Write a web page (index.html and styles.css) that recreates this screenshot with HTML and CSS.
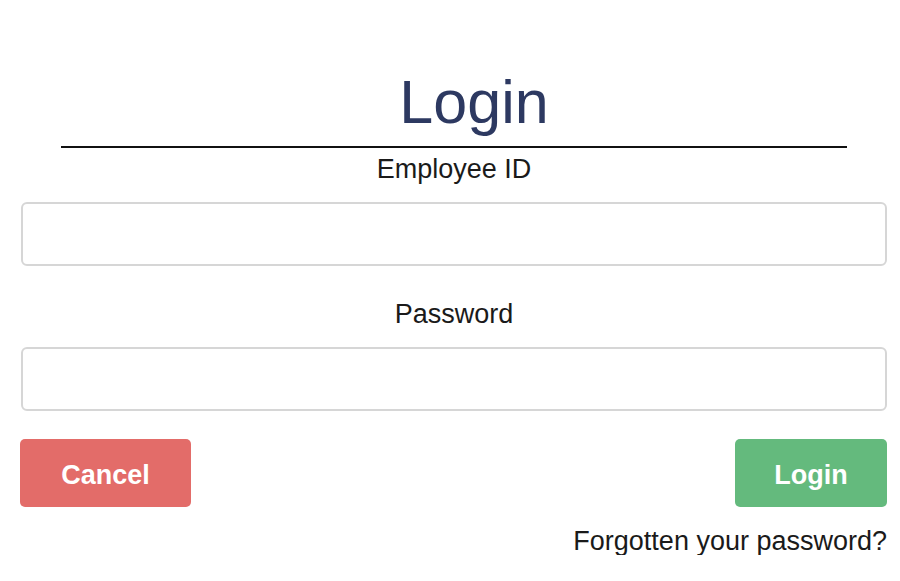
FILE: index.html
```html
<!DOCTYPE html>
<html lang="en">
<head>
  <meta charset="UTF-8" />
  <meta name="viewport" content="width=device-width, initial-scale=1.0"/>
  <title>Login</title>
  <link rel="stylesheet" href="styles.css">
</head>
<body>
  <div class="container">
    <h1>Login</h1>
    <hr class="divider" />
    <form id="loginForm">
      <label for="employeeId">Employee ID</label>
      <input type="text" id="employeeId" name="employeeId" />

      <label for="password" class="second">Password</label>
      <input type="password" id="password" name="password" />

      <div class="actions">
        <button type="button" class="btn cancel">Cancel</button>
        <button type="submit" class="btn login">Login</button>
      </div>
    </form>
    <a href="#" class="forgot">Forgotten your password?</a>
  </div>
</body>
</html>
```

FILE: styles.css
```css
body {
  margin: 0;
  background-color: #ffffff;
  font-family: "Liberation Sans", Arial, sans-serif;
  color: #1a1a1a;
}

.container {
  padding: 0 13px 0 21px;
}

h1 {
  margin: 67px 0 0;
  padding-left: 40px;
  font-size: 61px;
  line-height: 71px;
  font-weight: normal;
  text-align: center;
  color: #2d3961;
}

.divider {
  margin: 8px 40px 0;
  border: none;
  border-top: 2px solid #111;
  height: 0;
}

label {
  display: block;
  margin: 7px 0 19px;
  font-size: 27px;
  line-height: 28px;
  text-align: center;
}

label.second {
  margin-top: 34px;
}

input {
  display: block;
  box-sizing: border-box;
  width: 100%;
  height: 64px;
  margin: 0;
  border: 2px solid #d6d6d6;
  border-radius: 6px;
  font-size: 22px;
  padding: 0 12px;
}

.actions {
  display: flex;
  justify-content: space-between;
  margin-top: 28px;
}

.btn {
  height: 68px;
  padding: 4px 0 0;
  border: none;
  border-radius: 5px;
  color: #fff;
  font-family: "Liberation Sans", Arial, sans-serif;
  font-size: 27px;
  font-weight: bold;
  cursor: pointer;
}

.cancel {
  width: 171px;
  margin-left: -1px;
  background-color: #e36c69;
}

.login {
  width: 152px;
  background-color: #64ba7d;
}

.forgot {
  display: block;
  margin-top: 20px;
  font-size: 27px;
  line-height: 28px;
  text-align: right;
  color: #1a1a1a;
  text-decoration: none;
}
```
